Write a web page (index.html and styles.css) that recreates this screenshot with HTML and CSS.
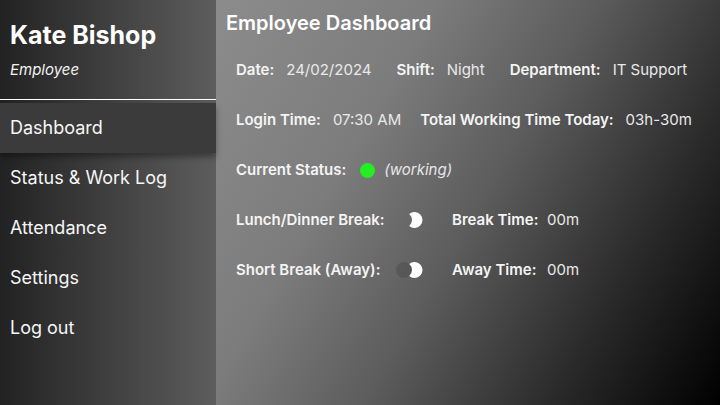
FILE: index.html
```html
<!DOCTYPE html>
<html lang="en">
<head>
<meta charset="utf-8">
<title>Employee Dashboard</title>
<link rel="stylesheet" href="styles.css">
</head>
<body>
<div class="app">
  <aside class="sidebar">
    <div class="profile">
      <div class="name">Kate Bishop</div>
      <div class="role">Employee</div>
    </div>
    <nav class="nav">
      <a class="nav-item active">Dashboard</a>
      <a class="nav-item">Status &amp; Work Log</a>
      <a class="nav-item">Attendance</a>
      <a class="nav-item">Settings</a>
      <a class="nav-item">Log out</a>
    </nav>
  </aside>
  <main class="main">
    <h1 class="title">Employee Dashboard</h1>
    <div class="rows">
      <div class="row">
        <span class="pair"><span class="label">Date:</span><span class="value">24/02/2024</span></span>
        <span class="pair"><span class="label">Shift:</span><span class="value">Night</span></span>
        <span class="pair"><span class="label">Department:</span><span class="value">IT Support</span></span>
      </div>
      <div class="row row-tight">
        <span class="pair"><span class="label">Login Time:</span><span class="value">07:30 AM</span></span>
        <span class="pair"><span class="label">Total Working Time Today:</span><span class="value">03h-30m</span></span>
      </div>
      <div class="row">
        <span class="pair"><span class="label">Current Status:</span><span class="dot"></span><span class="status">(working)</span></span>
      </div>
      <div class="break-grid">
        <span class="label">Lunch/Dinner Break:</span>
        <span class="toggle">
          <svg width="27" height="16" viewBox="0 0 27 16"><path d="M13.25 1.96 A8 8 0 1 1 13.25 14.04 A8 8 0 0 0 13.25 1.96 Z" fill="#fff"/></svg>
        </span>
        <span class="label">Break Time:</span>
        <span class="value">00m</span>

        <span class="label">Short Break (Away):</span>
        <span class="toggle">
          <svg width="27" height="16" viewBox="0 0 27 16"><circle cx="8" cy="8" r="8" fill="rgba(0,0,0,0.12)"/><path d="M13.25 1.96 A8 8 0 1 1 13.25 14.04 A8 8 0 0 0 13.25 1.96 Z" fill="#fff"/></svg>
        </span>
        <span class="label">Away Time:</span>
        <span class="value">00m</span>
      </div>
    </div>
  </main>
</div>
</body>
</html>
```

FILE: styles.css
```css
* { box-sizing: border-box; }
html, body { margin: 0; padding: 0; }
body {
  width: 720px;
  height: 405px;
  overflow: hidden;
  font-family: Inter, "Noto Sans", "Liberation Sans", sans-serif;
  color: #fff;
  background: #000;
}
.app {
  display: flex;
  width: 720px;
  height: 405px;
}
.sidebar {
  width: 216px;
  flex: none;
  height: 100%;
  background: linear-gradient(to right, #222222, #5d5d5d);
  display: flex;
  flex-direction: column;
  position: relative;
  z-index: 1;
}
.profile {
  padding: 20px 10px 20px 10px;
  border-bottom: 1px solid #ffffff;
}
.name {
  font-size: 25px;
  line-height: 30px;
  font-weight: 700;
  color: #fff;
}
.role {
  margin-top: 11px;
  font-size: 15px;
  line-height: 18px;
  font-style: italic;
  color: #f2f2f2;
}
.nav {
  display: flex;
  flex-direction: column;
  padding-top: 3px;
}
.nav-item {
  display: block;
  height: 50px;
  line-height: 50px;
  padding-left: 10px;
  font-size: 18px;
  color: #f6f6f6;
  text-decoration: none;
}
.nav-item.active {
  background: #3b3b3b;
  box-shadow: 0 4px 6px rgba(0, 0, 0, 0.35);
}
.main {
  flex: 1;
  height: 100%;
  padding: 11px 10px 10px 10px;
  background: linear-gradient(120deg, #8c8c8c 0%, #7c7c7c 30%, #5c5c5c 52%, #2a2a2a 77%, #000 100%);
}
.title {
  margin: 0 0 10px 0;
  font-size: 20px;
  line-height: 24px;
  font-weight: 600;
  color: #fff;
}
.rows {
  padding-left: 10px;
}
.row {
  display: flex;
  align-items: center;
  height: 50px;
  gap: 25px;
}
.row-tight {
  gap: 19px;
}
.pair {
  display: flex;
  align-items: center;
}
.label {
  font-size: 15px;
  line-height: 18px;
  font-weight: 600;
  color: #f4f4f4;
}
.pair .label {
  margin-right: 12px;
}
.value {
  font-size: 15px;
  line-height: 18px;
  color: #e9e9e9;
}
.dot {
  width: 15px;
  height: 15px;
  border-radius: 50%;
  background: #22ee22;
  margin-left: 2px;
  margin-right: 9px;
}
.status {
  font-size: 15px;
  line-height: 18px;
  font-style: italic;
  color: #e6e6e6;
}
.break-grid {
  display: grid;
  grid-template-columns: 160px 56px 95px auto;
  grid-auto-rows: 50px;
  align-items: center;
}
.toggle {
  display: flex;
  align-items: center;
  height: 16px;
}
.toggle svg { display: block; }
```
